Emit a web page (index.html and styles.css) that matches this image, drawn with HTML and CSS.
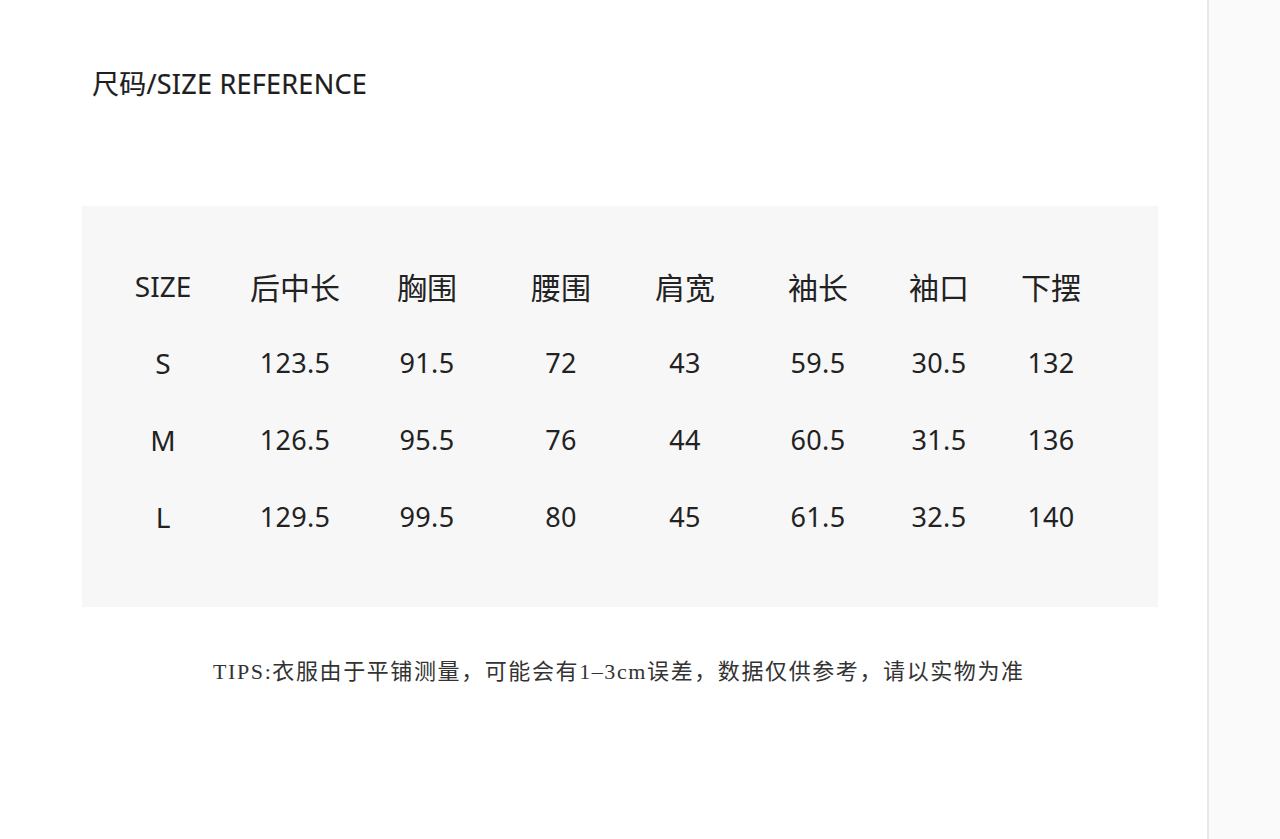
FILE: index.html
```html
<!DOCTYPE html>
<html lang="zh-CN">
<head>
<meta charset="utf-8">
<title>尺码/SIZE REFERENCE</title>
<link rel="stylesheet" href="styles.css">
</head>
<body>
<div class="page">
  <main class="content">
    <h1 class="title">尺码/SIZE REFERENCE</h1>
    <section class="panel">
      <div class="grid">
        <div class="cell head latin">SIZE</div>
        <div class="cell head">后中长</div>
        <div class="cell head">胸围</div>
        <div class="cell head">腰围</div>
        <div class="cell head">肩宽</div>
        <div class="cell head">袖长</div>
        <div class="cell head">袖口</div>
        <div class="cell head">下摆</div>

        <div class="cell size">S</div>
        <div class="cell num">123.5</div>
        <div class="cell num">91.5</div>
        <div class="cell num">72</div>
        <div class="cell num">43</div>
        <div class="cell num">59.5</div>
        <div class="cell num">30.5</div>
        <div class="cell num">132</div>

        <div class="cell size">M</div>
        <div class="cell num">126.5</div>
        <div class="cell num">95.5</div>
        <div class="cell num">76</div>
        <div class="cell num">44</div>
        <div class="cell num">60.5</div>
        <div class="cell num">31.5</div>
        <div class="cell num">136</div>

        <div class="cell size">L</div>
        <div class="cell num">129.5</div>
        <div class="cell num">99.5</div>
        <div class="cell num">80</div>
        <div class="cell num">45</div>
        <div class="cell num">61.5</div>
        <div class="cell num">32.5</div>
        <div class="cell num">140</div>
      </div>
    </section>
    <p class="tips">TIPS:衣服由于平铺测量，可能会有1–3cm误差，数据仅供参考，请以实物为准</p>
  </main>
  <aside class="sidebar"></aside>
</div>
</body>
</html>
```

FILE: styles.css
```css
* {
  box-sizing: border-box;
}

html, body {
  margin: 0;
  padding: 0;
  background: #ffffff;
}

body {
  font-family: "Noto Sans", "Noto Sans CJK SC", sans-serif;
  color: #222222;
}

.page {
  display: flex;
  width: 1280px;
  height: 839px;
  overflow: hidden;
}

.content {
  width: 1207px;
  flex: none;
  padding-top: 66px;
}

.sidebar {
  flex: 1;
  background: #fafafa;
  border-left: 2px solid #e8e8e8;
}

.title {
  margin: 0 0 0 92px;
  font-family: "Noto Sans", "Noto Sans CJK SC", sans-serif;
  font-weight: 400;
  font-size: 27px;
  line-height: 36px;
  color: #1e1e1e;
  letter-spacing: 0.25px;
  -webkit-text-stroke: 0.2px #1e1e1e;
}

.panel {
  margin: 104px 0 0 82px;
  width: 1076px;
  height: 401px;
  background: #f7f7f7;
  padding-top: 41px;
}

.grid {
  display: grid;
  grid-template-columns: 162px 102px 162px 106px 142px 124px 118px 106px;
  grid-auto-rows: 77px;
}

.cell {
  display: flex;
  align-items: center;
  justify-content: center;
  color: #222222;
  white-space: nowrap;
}

.head {
  font-family: "Noto Sans CJK SC", sans-serif;
  font-size: 30px;
}

.head.latin,
.size {
  font-family: "Noto Sans", "Noto Sans CJK SC", sans-serif;
  font-size: 28px;
  letter-spacing: 0;
}

.num {
  font-family: "Noto Sans", sans-serif;
  font-size: 27px;
  letter-spacing: 0.3px;
}

.tips {
  margin: 50px 0 0 213px;
  font-family: "Liberation Serif", "Noto Sans CJK SC", serif;
  font-size: 22px;
  line-height: 30px;
  letter-spacing: 1.6px;
  color: #333333;
}
```
